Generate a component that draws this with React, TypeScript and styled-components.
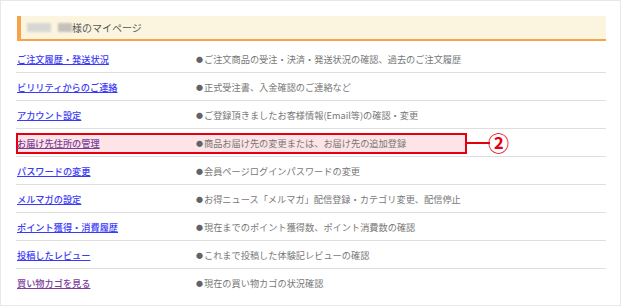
import React from 'react';
import styled, { createGlobalStyle } from 'styled-components';

const GlobalStyle = createGlobalStyle`
  body {
    margin: 0;
    background: #fff;
    font-family: "Noto Sans CJK JP", "Noto Sans", sans-serif;
  }
`;

const items = [
  { label: 'ご注文履歴・発送状況', desc: 'ご注文商品の受注・決済・発送状況の確認、過去のご注文履歴' },
  { label: 'ビリリティからのご連絡', desc: '正式受注書、入金確認のご連絡など' },
  { label: 'アカウント設定', desc: 'ご登録頂きましたお客様情報(Email等)の確認・変更' },
  { label: 'お届け先住所の管理', desc: '商品お届け先の変更または、お届け先の追加登録', visited: true, marked: true },
  { label: 'パスワードの変更', desc: '会員ページログインパスワードの変更' },
  { label: 'メルマガの設定', desc: 'お得ニュース「メルマガ」配信登録・カテゴリ変更、配信停止' },
  { label: 'ポイント獲得・消費履歴', desc: '現在までのポイント獲得数、ポイント消費数の確認' },
  { label: '投稿したレビュー', desc: 'これまで投稿した体験記レビューの確認' },
  { label: '買い物カゴを見る', desc: '現在の買い物カゴの状況確認', visited: true },
];

const MyPage = () => {
  return (
    <Frame>
      <Heading>
        <Blur $w={24} />
        <Blur $w={14} $gap={7} $dark />
        様のマイページ
      </Heading>
      <List>
        {items.map((item) => (
          <Row key={item.label}>
            {item.marked && (
              <>
                <MarkBox />
                <Leader />
                <Number>②</Number>
              </>
            )}
            <Link href="#" $visited={item.visited}>
              {item.label}
            </Link>
            <Desc>
              <Bullet>●</Bullet>
              {item.desc}
            </Desc>
          </Row>
        ))}
      </List>
    </Frame>
  );
};

export default function App() {
  return (
    <>
      <GlobalStyle />
      <MyPage />
    </>
  );
}

const Frame = styled.div`
  box-sizing: border-box;
  width: 621px;
  height: 306px;
  border: 1px solid #e8e8e8;
  padding: 15px 14px 0 15px;
`;

const Heading = styled.div`
  box-sizing: border-box;
  display: flex;
  align-items: center;
  height: 25px;
  margin-left: 1px;
  padding-left: 6px;
  background: #fbf5df;
  border-left: 4px solid #f8a24c;
  border-bottom: 2px solid #f8a24c;
  font-size: 10px;
  color: #555;
`;

const Blur = styled.span<{ $w: number; $gap?: number; $dark?: boolean }>`
  display: inline-block;
  width: ${(p) => p.$w}px;
  height: 9px;
  margin-left: ${(p) => p.$gap ?? 0}px;
  background: ${(p) => (p.$dark ? '#c4c0bc' : '#d8d6d2')};
  filter: blur(1.2px);
`;

const List = styled.div`
  padding-top: 4px;
`;

const Row = styled.div`
  position: relative;
  box-sizing: border-box;
  display: flex;
  align-items: center;
  height: 28px;
  border-bottom: 1px solid #dedede;
  font-size: 9.2px;

  &:last-child {
    border-bottom: none;
  }
`;

const Link = styled.a<{ $visited?: boolean }>`
  position: relative;
  width: 179px;
  padding-left: 1px;
  color: ${(p) => (p.$visited ? '#7b3d9c' : '#3b3bf5')};
  text-decoration: underline;
  font-weight: 500;
`;

const Desc = styled.span`
  position: relative;
  display: flex;
  align-items: center;
  color: #777;
`;

const Bullet = styled.span`
  font-size: 7px;
  margin-right: 1px;
  color: #5f646b;
`;

const MarkBox = styled.div`
  position: absolute;
  top: 4px;
  left: 0;
  box-sizing: border-box;
  width: 451px;
  height: 21px;
  border: 2px solid #e6000f;
  background: #fde4e6;
`;

const Leader = styled.div`
  position: absolute;
  top: 13px;
  left: 450px;
  width: 24px;
  height: 2px;
  background: #e6000f;
`;

const Number = styled.span`
  position: absolute;
  top: 2px;
  left: 472px;
  font-size: 21px;
  line-height: 22px;
  font-weight: bold;
  color: #e6000f;
  font-family: "Noto Sans CJK JP", sans-serif;
`;
